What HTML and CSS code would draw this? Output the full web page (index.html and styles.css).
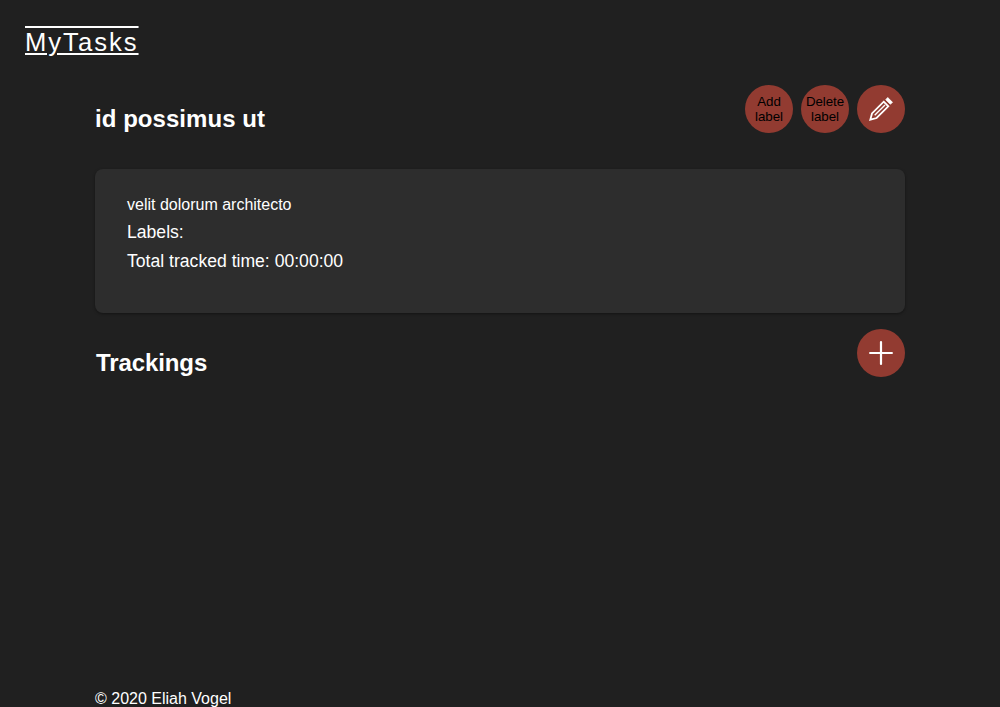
FILE: index.html
```html
<!DOCTYPE html>
<html lang="en">
<head>
<meta charset="utf-8">
<title>MyTasks</title>
<link rel="stylesheet" href="styles.css">
</head>
<body>
<header class="header"><a class="logo">MyTasks</a></header>
<main class="content">
  <div class="title-row">
    <h2 class="title name">id possimus ut</h2>
    <div class="actions">
      <button class="round">Add label</button>
      <button class="round">Delete label</button>
      <button class="round" aria-label="Edit"><svg class="icon" viewBox="0 0 24 24" fill="none" stroke="#fff"><path fill="#fff" stroke-width=".8" stroke-linejoin="round" d="M18.7 0.5 23.5 5.3 21.3 7.2 16.8 2.7Z"/><path stroke-width="1.8" d="M14.7 4.7 19.3 9.3 7.6 21 1.3 22.7 3 16.4Z"/><path stroke-width="1.4" d="M16 8 5.7 18.3"/></svg></button>
    </div>
  </div>
  <section class="card">
    <p class="description">velit dolorum architecto</p>
    <p class="labels">Labels:</p>
    <p class="total">Total tracked time: 00:00:00</p>
  </section>
  <div class="title-row">
    <h2 class="title trackings">Trackings</h2>
    <button class="round" aria-label="Add tracking"><svg class="icon" viewBox="0 0 24 24"><path stroke="#fff" stroke-width="2.2" stroke-linecap="round" d="M12 1.1V22.9M1.1 12H22.9"/></svg></button>
  </div>
</main>
<footer class="footer">© 2020 Eliah Vogel</footer>
</body>
</html>
```
FILE: styles.css
```css
* { box-sizing: border-box; }
body {
  margin: 0;
  height: 707px;
  overflow: hidden;
  display: flex;
  flex-direction: column;
  background: #202020;
  color: #fff;
  font: 16px/18px "Liberation Sans", Arial, sans-serif;
}
.header { height: 85px; padding: 28px 25px 0; }
.logo {
  display: block;
  width: max-content;
  font-size: 25.6px;
  line-height: 29px;
  letter-spacing: 2px;
  text-decoration: underline overline 2px;
  text-underline-offset: 2px;
}
.content { width: 810px; margin: 0 auto; flex: 1; }
.title-row { display: flex; justify-content: space-between; align-items: flex-start; }
.title { margin: 20px 0 0; font-size: 24px; line-height: 28px; }
.name { letter-spacing: 0.05px; }
.trackings { padding-left: 1px; letter-spacing: -0.1px; }
.actions { display: flex; gap: 8px; }
.round {
  width: 48px;
  height: 48px;
  padding: 0;
  border: 0;
  border-radius: 50%;
  background: #923b31;
  color: #000;
  font: 13.333px/15px "Liberation Sans", Arial, sans-serif;
  letter-spacing: -0.05px;
  display: flex;
  align-items: center;
  justify-content: center;
}
.icon { width: 24px; height: 24px; }
.card {
  height: 144px;
  margin: 36px 0 16px;
  padding: 27px 32px;
  border-radius: 8px;
  background: #2d2d2d;
  box-shadow: 0 1px 3px rgba(0, 0, 0, .4);
}
.card p { margin: 0; }
.labels, .total { font-size: 17.6px; line-height: 20px; }
.card .labels { margin-top: 8px; }
.card .total { margin-top: 9px; }
.footer { width: 810px; margin: 0 auto; height: 17px; }
```
